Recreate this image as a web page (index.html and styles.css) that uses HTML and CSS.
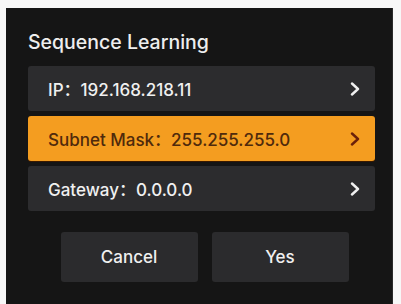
FILE: index.html
```html
<!DOCTYPE html>
<html>
<head>
<meta charset="utf-8">
<link rel="stylesheet" href="styles.css">
</head>
<body>
<div class="panel">
  <div class="title">Sequence Learning</div>
  <div class="rows">
    <div class="row"><span>IP：192.168.218.11</span><svg class="chev" viewBox="0 0 10 14"><path d="M2 1.5 L8 7 L2 12.5"/></svg></div>
    <div class="row active"><span>Subnet Mask：255.255.255.0</span><svg class="chev" viewBox="0 0 10 14"><path d="M2 1.5 L8 7 L2 12.5"/></svg></div>
    <div class="row"><span>Gateway：0.0.0.0</span><svg class="chev" viewBox="0 0 10 14"><path d="M2 1.5 L8 7 L2 12.5"/></svg></div>
  </div>
  <div class="buttons">
    <div class="btn">Cancel</div>
    <div class="btn">Yes</div>
  </div>
</div>
</body>
</html>
```
FILE: styles.css
```css
html, body {
  margin: 0;
  padding: 0;
  background: #f7f7f7;
}
body {
  width: 401px;
  height: 304px;
  overflow: hidden;
  font-family: Inter, Roboto, "Liberation Sans", "Noto Sans CJK SC", sans-serif;
  font-weight: 500;
}
.panel {
  margin: 8px 0 0 6px;
  width: 387px;
  height: 296px;
  background: #151515;
  box-sizing: border-box;
  padding: 22px 17px 0 22px;
  border-right: 1px solid #2a2a2a;
}
.title {
  color: #eeeeee;
  font-size: 19.5px;
  line-height: 24px;
  height: 24px;
}
.rows {
  margin-top: 12px;
  display: flex;
  flex-direction: column;
  gap: 5px;
}
.row {
  height: 45px;
  background: #2c2c2e;
  border-radius: 3px;
  display: flex;
  align-items: center;
  justify-content: space-between;
  padding: 0 15px 0 20px;
  color: #f0f0f0;
  font-size: 17px;
}
.row.active {
  background: #f49d20;
  color: #4f2a0c;
  box-shadow: 0 1px 0 #3a1a00;
}
.chev {
  width: 10px;
  height: 14px;
  fill: none;
  stroke: #f0f0f0;
  stroke-width: 2.4;
  stroke-linecap: round;
  stroke-linejoin: round;
}
.row.active .chev {
  stroke: #6a200a;
}
.buttons {
  margin-top: 21px;
  display: flex;
  justify-content: center;
  gap: 14px;
  padding-left: 6px;
}
.btn {
  width: 137px;
  height: 50px;
  background: #2b2b2d;
  border-radius: 3px;
  display: flex;
  align-items: center;
  justify-content: center;
  color: #f0f0f0;
  font-size: 17px;
}
```
